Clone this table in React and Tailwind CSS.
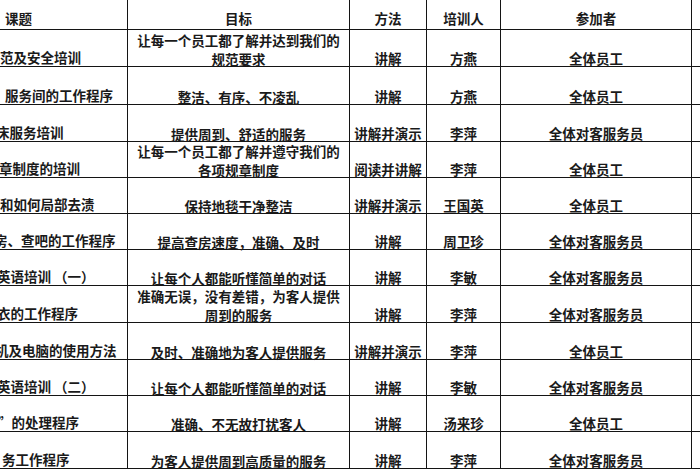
import React from 'react';

const rows = [
  { h: 'h-[37px]', topic: '范及安全培训', shift: 'ml-0', goal: ['让每一个员工都了解并达到我们的', '规范要求'], method: '讲解', trainer: '方燕', who: '全体员工' },
  { h: 'h-[38px]', topic: '服务间的工作程序', shift: 'ml-[5px]', goal: ['整洁、有序、不凌乱'], method: '讲解', trainer: '方燕', who: '全体员工' },
  { h: 'h-[37px]', topic: '床服务培训', shift: 'ml-[-4px]', goal: ['提供周到、舒适的服务'], method: '讲解并演示', trainer: '李萍', who: '全体对客服务员' },
  { h: 'h-[36px]', topic: '章制度的培训', shift: 'ml-[-1px]', goal: ['让每一个员工都了解并遵守我们的', '各项规章制度'], method: '阅读并讲解', trainer: '李萍', who: '全体员工' },
  { h: 'h-[36px]', topic: '和如何局部去渍', shift: 'ml-0', goal: ['保持地毯干净整洁'], method: '讲解并演示', trainer: '王国英', who: '全体员工' },
  { h: 'h-[36px]', topic: '房、查吧的工作程序', shift: 'ml-[-6px]', goal: ['提高查房速度，准确、及时'], method: '讲解', trainer: '周卫珍', who: '全体对客服务员' },
  { h: 'h-[36px]', topic: '英语培训 （一）', shift: 'ml-[-3px]', goal: ['让每个人都能听懂简单的对话'], method: '讲解', trainer: '李敏', who: '全体对客服务员' },
  { h: 'h-[37px]', topic: '衣的工作程序', shift: 'ml-[-3px]', goal: ['准确无误，没有差错，为客人提供', '周到的服务'], method: '讲解', trainer: '李萍', who: '全体对客服务员' },
  { h: 'h-[37px]', topic: '机及电脑的使用方法', shift: 'ml-[-5px]', goal: ['及时、准确地为客人提供服务'], method: '讲解并演示', trainer: '李萍', who: '全体员工' },
  { h: 'h-[36px]', topic: '英语培训 （二）', shift: 'ml-[-3px]', goal: ['让每个人都能听懂简单的对话'], method: '讲解', trainer: '李敏', who: '全体对客服务员' },
  { h: 'h-[36px]', topic: '”的处理程序', shift: 'ml-[-2px]', goal: ['准确、不无故打扰客人'], method: '讲解', trainer: '汤来珍', who: '全体员工' },
  { h: 'h-[37px]', topic: '务工作程序', shift: 'ml-[2px]', goal: ['为客人提供周到高质量的服务'], method: '讲解', trainer: '李萍', who: '全体对客服务员' },
];

const grid = 'grid grid-cols-[128px_222px_77px_74px_191px_1fr] border-b border-[#141414]';
const cell = 'border-r border-[#141414] flex items-end justify-center pb-[1px] whitespace-nowrap leading-[14px]';
const head = 'border-r border-[#141414] flex items-center justify-center pt-[6px] leading-[14px]';

export default function App() {
  return (
    <div
      className="w-[700px] h-[470px] bg-white text-[#1a1a1a] text-[13.5px] font-semibold overflow-hidden"
      style={{ fontFamily: '"Noto Sans CJK SC", "Noto Sans", sans-serif' }}
    >
      {/* header */}
      <div className={`${grid} h-[30px]`}>
        <div className="border-r border-[#141414] flex items-center pl-[5px] pt-[6px] leading-[14px]">课题</div>
        <div className={head}>目标</div>
        <div className={head}>方法</div>
        <div className={head}>培训人</div>
        <div className={head}>参加者</div>
        <div />
      </div>

      {rows.map((r, i) => (
        <div key={i} className={`${grid} ${r.h}`}>
          <div className="border-r border-[#141414] flex items-end pb-[2px] overflow-hidden whitespace-nowrap leading-[14px]">
            <span className={r.shift}>{r.topic}</span>
          </div>
          <div className="border-r border-[#141414] flex flex-col justify-end items-center gap-[5px] pb-0 whitespace-nowrap leading-[14px]">
            {r.goal.map((g, j) => (
              <div key={j}>{g}</div>
            ))}
          </div>
          <div className={cell}>{r.method}</div>
          <div className={cell}>{r.trainer}</div>
          <div className={cell}>{r.who}</div>
          <div />
        </div>
      ))}
    </div>
  );
}
